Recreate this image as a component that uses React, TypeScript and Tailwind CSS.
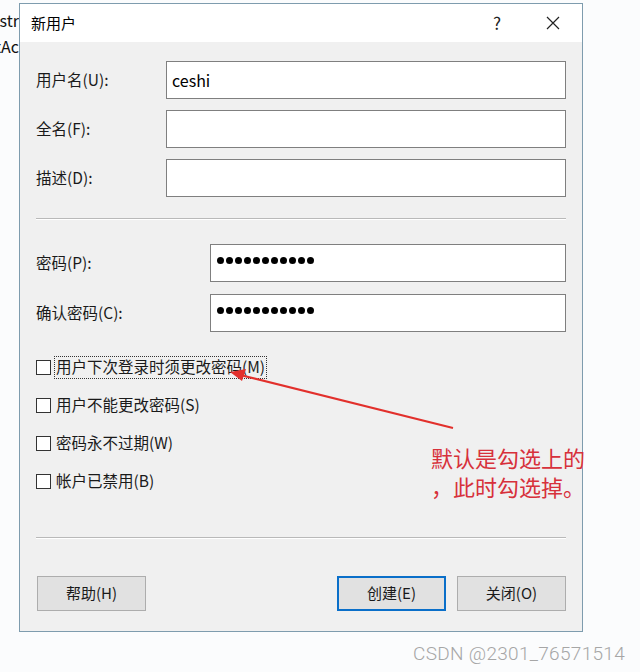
const font = { fontFamily: '"Noto Sans CJK SC", "Noto Sans", sans-serif' };

function Field({ label, labelWidth, children }: { label: string; labelWidth: string; children?: React.ReactNode }) {
  return (
    <div className="flex items-center">
      <div className={`${labelWidth} shrink-0 text-[15.5px] text-[#1a1a1a]`}>{label}</div>
      <div className="flex-1 h-[38px] bg-white border border-[#7f7f7f] flex items-center pl-[5px] text-[16px] text-black">
        {children}
      </div>
    </div>
  );
}

function Dots() {
  return (
    <div className="flex gap-[2px] pl-[1px] -mt-[6px]">
      {Array.from({ length: 11 }).map((_, i) => (
        <div key={i} className="w-[7px] h-[7px] rounded-full bg-black" />
      ))}
    </div>
  );
}

function Check({ label, focused }: { label: string; focused?: boolean }) {
  return (
    <div className="h-[38px] flex items-center">
      <div className="w-[15px] h-[15px] bg-white border border-[#333333] shrink-0" />
      <div
        className={`ml-[3px] h-[23px] flex items-center px-[1px] text-[15.5px] text-[#1a1a1a] border border-dotted ${
          focused ? 'border-[#333333]' : 'border-transparent'
        }`}
      >
        {label}
      </div>
    </div>
  );
}

function Button({ label, primary }: { label: string; primary?: boolean }) {
  return (
    <div
      className={`w-[109px] h-[35px] flex items-center justify-center bg-[#e1e1e1] text-[15px] text-[#1a1a1a] ${
        primary ? 'border-2 border-[#0a6fc9]' : 'border border-[#adadad]'
      }`}
    >
      {label}
    </div>
  );
}

export default function App() {
  return (
    <div className="relative w-[640px] h-[672px] overflow-hidden bg-[#fbfcfd]" style={font}>
      <div className="flex pt-[3px]">
        {/* window behind the dialog */}
        <div className="w-[19px] shrink-0 overflow-hidden flex flex-col items-end pt-[4px] text-[16px] text-[#111] leading-[26px]">
          <span className="whitespace-nowrap">str</span>
          <span className="whitespace-nowrap">tAc</span>
        </div>

        <div className="w-[564px] h-[629px] border border-[#7e9cae] flex flex-col bg-[#f0f0f0] shrink-0">
          <div className="h-[38px] bg-white flex items-center pl-[11px] shrink-0">
            <span className="text-[15px] text-black">新用户</span>
            <div className="flex-1" />
            <span className="text-[17px] text-[#222] w-[20px] text-center">?</span>
            <div className="w-[39px]" />
            <svg width="14" height="14" viewBox="0 0 14 14" className="mr-[22px]">
              <path d="M1 1 L13 13 M13 1 L1 13" stroke="#222" strokeWidth="1.2" />
            </svg>
          </div>

          <div className="flex-1 flex flex-col pl-[16px] pr-[16px] pt-[19px] pb-[20px]">
            <div className="flex flex-col gap-[11px]">
              <Field label="用户名(U):" labelWidth="w-[130px]">ceshi</Field>
              <Field label="全名(F):" labelWidth="w-[130px]" />
              <Field label="描述(D):" labelWidth="w-[130px]" />
            </div>

            <div className="mt-[21px] border-t border-[#b9b9b9] border-b border-b-white" />

            <div className="mt-[24px] flex flex-col gap-[12px]">
              <Field label="密码(P):" labelWidth="w-[174px]">
                <Dots />
              </Field>
              <Field label="确认密码(C):" labelWidth="w-[174px]">
                <Dots />
              </Field>
            </div>

            <div className="mt-[16px] flex flex-col">
              <Check label="用户下次登录时须更改密码(M)" focused />
              <Check label="用户不能更改密码(S)" />
              <Check label="密码永不过期(W)" />
              <Check label="帐户已禁用(B)" />
            </div>

            <div className="mt-[37px] border-t border-[#b9b9b9] border-b border-b-white" />

            <div className="flex-1" />
            <div className="flex items-center pl-[1px]">
              <Button label="帮助(H)" />
              <div className="flex-1" />
              <div className="flex gap-[11px]">
                <Button label="创建(E)" primary />
                <Button label="关闭(O)" />
              </div>
            </div>
          </div>
        </div>
      </div>

      <div className="flex justify-end pr-[15px] mt-[8px]">
        <span
          className="text-[19px] font-light text-[#a6a6a6] tracking-[0.3px]"
          style={{ fontFamily: 'Roboto, "Liberation Sans", sans-serif' }}
        >
          CSDN @2301_76571514
        </span>
      </div>

      {/* red annotation over the dialog */}
      <svg className="absolute left-0 top-0 pointer-events-none" width="640" height="672">
        <line x1="453" y1="428" x2="240" y2="375" stroke="#e2302c" strokeWidth="2.2" />
        <polygon points="230,372 246,369 242,381" fill="#e2302c" />
      </svg>
      <div className="absolute left-[431px] top-[443px] text-[22px] leading-[29px] text-[#d7313b] pointer-events-none">
        <div className="whitespace-nowrap">默认是勾选上的</div>
        <div className="whitespace-nowrap">，此时勾选掉。</div>
      </div>
    </div>
  );
}
